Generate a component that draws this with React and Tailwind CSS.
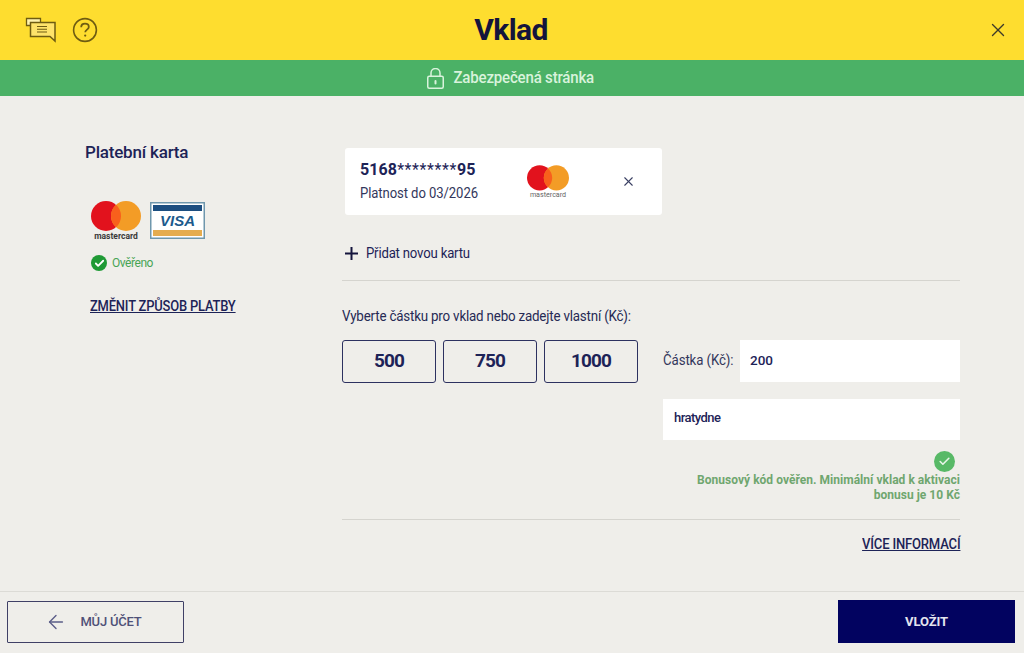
import React from 'react';
import { X, Check, ArrowLeft } from 'lucide-react';

const NAVY = 'text-[#1d2357]';

function Mastercard({ small }) {
  return (
    <svg width={small ? 42 : 50} height={small ? 34 : 40} viewBox="0 0 50 40">
      <circle cx="15" cy="15" r="15" fill="#e2121d" />
      <circle cx="35" cy="15" r="15" fill="#f39c26" />
      <path d="M25 3.8a15 15 0 0 1 0 22.4a15 15 0 0 1 0-22.4z" fill="#f8601c" />
      <text x="25" y="38" textAnchor="middle" fontSize="8.5" fontWeight={small ? 400 : 700} fill={small ? '#666' : '#3a3a3a'} fontFamily="Roboto, sans-serif">mastercard</text>
    </svg>
  );
}

function Visa() {
  return (
    <svg width="55" height="37" viewBox="0 0 55 37" className="mt-[1px]">
      <rect x="0.75" y="0.75" width="53.5" height="35.5" fill="#fff" stroke="#6f97ad" strokeWidth="1.5" />
      <rect x="3" y="3" width="49" height="6" fill="#1c4e80" />
      <rect x="3" y="28" width="49" height="6" fill="#e5ac4f" />
      <text x="27.5" y="24" textAnchor="middle" fontSize="15" fontWeight="900" fontStyle="italic" fill="#1c5a8c" fontFamily="'Liberation Sans', sans-serif">VISA</text>
    </svg>
  );
}

function ChatIcon() {
  return (
    <svg width="32" height="26" viewBox="0 0 32 26" fill="none" stroke="#6e5c12" strokeWidth="1.3">
      <path d="M5 8.5H1.5V1.5h14v3.5" fill="#fff3b0" />
      <path d="M5.5 5.5h24.5v18.5l-5-4.5H5.5z" fill="#fee36a" strokeWidth="1.5" />
      <path d="M12 9.5h10M12 12.2h10M12 15h10" strokeWidth="1.1" />
    </svg>
  );
}

function HelpIcon() {
  return (
    <svg width="26" height="26" viewBox="0 0 26 26" fill="none" stroke="#6e5c12">
      <circle cx="13" cy="13" r="11.4" strokeWidth="1.6" />
      <path d="M9.2 10.2c0-2.2 1.7-3.5 3.8-3.5s3.8 1.3 3.8 3.2c0 2.6-3.6 2.8-3.6 5.4" strokeWidth="1.8" />
      <circle cx="13.2" cy="18.6" r="1.1" fill="#6e5c12" stroke="none" />
    </svg>
  );
}

function LockIcon() {
  return (
    <svg width="19" height="21" viewBox="0 0 19 21" fill="none" stroke="#d9f3dc" strokeWidth="1.5">
      <rect x="2.75" y="8.25" width="15.5" height="12" rx="1.5" />
      <path d="M6 8V5a4.5 4.5 0 0 1 9 0v3" />
      <rect x="9.5" y="12" width="2" height="4.5" rx="1" fill="#d9f3dc" stroke="none" />
    </svg>
  );
}

function PlusIcon() {
  return (
    <svg width="13" height="13" viewBox="0 0 13 13" stroke="#14143c" strokeWidth="2">
      <path d="M6.5 0v13M0 6.5h13" />
    </svg>
  );
}

function AmountButton({ children }) {
  return (
    <button className={`w-[94px] h-[43px] border-[1.5px] border-[#2d3160] rounded-[3px] text-[19px] font-bold ${NAVY} tracking-[-0.9px]`}>
      {children}
    </button>
  );
}

export default function App() {
  return (
    <div className="w-[1024px] h-[653px] flex flex-col bg-[#efeeea] overflow-hidden font-['Roboto',sans-serif]">
      {/* hlavicka */}
      <header className="h-[60px] bg-[#fedd2f] flex items-center justify-between pl-[25px] pr-[15px] relative shrink-0">
        <div className="flex items-center gap-[15px]">
          <ChatIcon />
          <HelpIcon />
        </div>
        <h1 className="absolute left-0 right-[2px] text-center text-[30px] font-bold text-[#14143c] tracking-[-0.6px] pb-[2px]">Vklad</h1>
        <X className="w-[22px] h-[22px] text-[#3d3a2a]" strokeWidth={1.5} />
      </header>
      <div className="h-[36px] bg-[#4bb166] flex items-center justify-center gap-[5px] text-[#d9f3dc] text-[16px] font-medium tracking-[-0.2px] shrink-0">
        <LockIcon />
        <span className="inline-block scale-x-[0.94]">Zabezpečená stránka</span>
      </div>

      <main className="flex-1 flex">
        <aside className="w-[342px] pl-[85px] pt-[46px] shrink-0">
          <h2 className={`text-[17px] leading-[20px] font-medium ${NAVY} tracking-[-0.2px]`}>Platební karta</h2>
          <div className="flex items-start gap-[9px] mt-[39px] ml-[6px]">
            <Mastercard />
            <Visa />
          </div>
          <div className="flex items-center gap-[5px] mt-[13px] ml-[6px]">
            <span className="w-[16px] h-[16px] rounded-full bg-[#1f9a35] flex items-center justify-center">
              <Check className="w-[11px] h-[11px] text-white" strokeWidth={4} />
            </span>
            <span className="text-[12px] text-[#47a455] tracking-[-0.45px]">Ověřeno</span>
          </div>
          <a className={`inline-block origin-left scale-x-[0.924] mt-[25px] ml-[5px] text-[14px] leading-[18px] font-medium underline ${NAVY} tracking-[-0.2px]`}>ZMĚNIT ZPŮSOB PLATBY</a>
        </aside>

        <section className="w-[618px] pt-[52px]">
          <div className="ml-[3px] w-[317px] h-[67px] bg-white rounded-[3px] flex items-center pl-[15px]">
            <div className="w-[167px]">
              <div className={`text-[16px] leading-[20px] font-bold ${NAVY} tracking-[0.1px]`}>5168<span className="font-normal tracking-[0.6px]">********</span>95</div>
              <div className="origin-left scale-x-[0.937] text-[14px] leading-[20px] mt-[3px] text-[#33375c] tracking-[-0.1px] whitespace-nowrap">Platnost do 03/2026</div>
            </div>
            <Mastercard small />
            <X className="w-[15px] h-[15px] ml-[52px] text-[#3a4063]" strokeWidth={1.75} />
          </div>
          <div className={`flex items-center gap-[8px] ml-[3px] mt-[28px] h-[20px] text-[14px] ${NAVY} tracking-[-0.2px]`}>
            <PlusIcon />
            <span className="inline-block origin-left scale-x-[0.94]">Přidat novou kartu</span>
          </div>
          <div className="h-px bg-[#d5d4cf] mt-[17px]" />
          <p className="origin-left scale-x-[0.954] mt-[26px] text-[14px] leading-[18px] text-[#262a55] tracking-[-0.2px] whitespace-nowrap">Vyberte částku pro vklad nebo zadejte vlastní (Kč):</p>

          <div className="flex items-start mt-[15px]">
            <div className="flex gap-[7px] w-[321px] shrink-0">
              <AmountButton>500</AmountButton>
              <AmountButton>750</AmountButton>
              <AmountButton>1000</AmountButton>
            </div>
            <div className="flex-1 min-w-0">
              <div className="flex items-center">
                <span className="w-[77px] pb-[2px] origin-left scale-x-[0.946] text-[14px] text-[#33375c] tracking-[-0.1px] whitespace-nowrap">Částka (Kč):</span>
                <div className={`flex-1 h-[42px] bg-white flex items-center pl-[10px] pb-[2px] text-[13.5px] font-medium ${NAVY}`}>200</div>
              </div>
              <div className={`h-[41px] mt-[17px] bg-white flex items-center pl-[11px] pb-[3px] text-[13px] font-medium ${NAVY} tracking-[-0.55px]`}>hratydne</div>
              <div className="flex justify-end mt-[11px] pr-[5px]">
                <span className="w-[21px] h-[21px] rounded-full bg-[#58b967] flex items-center justify-center">
                  <Check className="w-[13px] h-[13px] text-[#e8f5e8]" strokeWidth={3} />
                </span>
              </div>
              <p className="text-right text-[12px] leading-[15px] font-bold text-[#6fa66f] tracking-[0.03px] mt-[1px] whitespace-nowrap">
                Bonusový kód ověřen. Minimální vklad k aktivaci<br />bonusu je 10 Kč
              </p>
            </div>
          </div>

          <div className="h-px bg-[#d5d4cf] mt-[16px]" />
          <div className="flex justify-end mt-[15px]">
            <a className={`inline-block origin-right scale-x-[0.933] text-[14px] leading-[18px] font-medium underline ${NAVY} tracking-[-0.2px]`}>VÍCE INFORMACÍ</a>
          </div>
        </section>
      </main>

      <footer className="h-[62px] border-t border-[#dcdbd6] flex items-start justify-between pl-[7px] pr-[9px] pt-[9px] shrink-0">
        <button className="w-[177px] h-[42px] border border-[#3f4066] rounded-[1px] flex items-center justify-center gap-[13px] text-[13px] font-medium text-[#4f5178] tracking-[-0.2px] pr-[4px]">
          <ArrowLeft className="w-[22px] h-[22px] text-[#5b5d88]" strokeWidth={1.5} />
          <span className="leading-[20px] pb-[1px]">MŮJ ÚČET</span>
        </button>
        <button className="w-[177px] h-[43px] -mt-[1px] bg-[#020360] text-[#e4e5ee] text-[13px] font-bold tracking-[-0.1px]">VLOŽIT</button>
      </footer>
    </div>
  );
}
